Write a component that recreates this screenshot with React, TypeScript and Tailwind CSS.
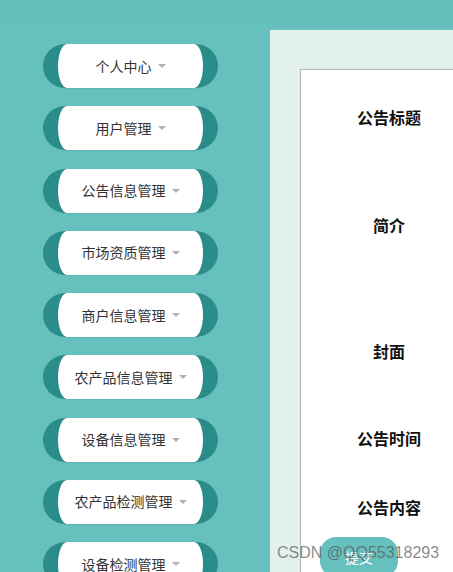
const menus = [
  "个人中心",
  "用户管理",
  "公告信息管理",
  "市场资质管理",
  "商户信息管理",
  "农产品信息管理",
  "设备信息管理",
  "农产品检测管理",
  "设备检测管理",
];

function MenuItem({ label }: { label: string }) {
  return (
    <div className="h-[44px] w-[175px] shrink-0 rounded-full bg-[#2a8d89] px-[15px]">
      <div className="flex h-full items-center justify-center gap-[6px] rounded-[9px/50%] bg-white shadow-[0_1px_1px_rgba(0,0,0,0.08)]">
        <span className="-mt-[1px] text-[14px] leading-none text-[#333]">{label}</span>
        <span className="h-0 w-0 border-x-[4px] border-t-[4px] border-x-transparent border-t-[#b0b0b0]" />
      </div>
    </div>
  );
}

export default function App() {
  return (
    <div
      className="relative h-[572px] w-[453px] overflow-hidden bg-[#66c1be]"
      style={{ fontFamily: '"Noto Sans CJK SC", "Noto Sans", sans-serif' }}
    >
      {/* top bar */}
      <div className="h-[30px] border-b border-[#6cc4c1] bg-[#65c0bd]" />

      <div className="flex h-[542px]">
        {/* sidebar */}
        <div className="flex w-[270px] shrink-0 flex-col gap-[18.25px] pl-[43px] pt-[14px]">
          {menus.map((m) => (
            <MenuItem key={m} label={m} />
          ))}
        </div>

        {/* main */}
        <div className="flex-1 bg-[#e3f1ed] pl-[30px] pt-[39px]">
          <div className="h-full border-l border-t border-[#b4b4b4] bg-white">
            <div className="flex w-[176px] flex-col items-center text-[16px] font-bold leading-[24px] text-[#111]">
              <div className="mt-[35px]">公告标题</div>
              <div className="mt-[84px]">简介</div>
              <div className="mt-[102px]">封面</div>
              <div className="mt-[63px]">公告时间</div>
              <div className="mt-[45px]">公告内容</div>
            </div>
            <div className="ml-[19px] mt-[18px] flex h-[40px] w-[78px] items-center justify-center rounded-[16px] bg-[#66c1be] text-[14px] text-white">
              提交
            </div>
          </div>
        </div>
      </div>

      {/* watermark */}
      <div
        className="pointer-events-none absolute left-[277px] top-[542px] text-[16px] leading-[22px] text-[#555]/70"
        style={{ fontFamily: '"Liberation Sans", Arial, sans-serif' }}
      >
        CSDN @QQ55318293
      </div>
    </div>
  );
}
